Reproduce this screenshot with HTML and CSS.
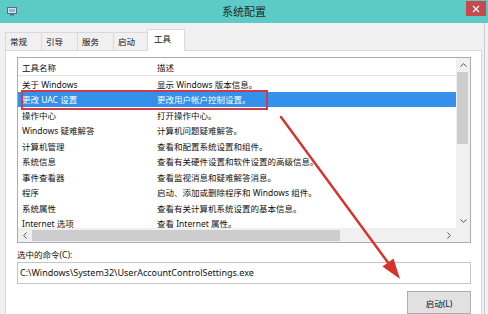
FILE: index.html
```html
<!DOCTYPE html>
<html lang="zh-CN">
<head>
<meta charset="utf-8">
<title>系统配置</title>
<link rel="stylesheet" href="styles.css">
</head>
<body>
<header class="titlebar">
  <div class="tb-left">
    <svg class="app-icon" width="10" height="9" viewBox="0 0 10 9">
      <rect x="0.5" y="0.5" width="9" height="6" fill="#cfe3f3" stroke="#5a6f86"/>
      <rect x="2" y="2" width="6" height="3" fill="#8fb7dd"/>
      <rect x="3" y="7" width="4" height="1.5" fill="#5a6f86"/>
    </svg>
  </div>
  <div class="tb-title">系统配置</div>
  <div class="tb-right">
    <div class="close">
      <svg width="8" height="8" viewBox="0 0 8 8"><path d="M1 1L7 7M7 1L1 7" stroke="#fff" stroke-width="1.3"/></svg>
    </div>
  </div>
</header>
<div class="client">
  <div class="tabs">
    <div class="tab">常规</div>
    <div class="tab">引导</div>
    <div class="tab">服务</div>
    <div class="tab">启动</div>
    <div class="tab active">工具</div>
  </div>
  <div class="panel">
    <div class="listbox">
      <div class="list">
        <div class="row head"><span class="cell">工具名称</span><span class="cell">描述</span></div>
        <div class="row"><span class="cell">关于 Windows</span><span class="cell">显示 Windows 版本信息。</span></div>
        <div class="row selected"><span class="cell">更改 UAC 设置</span><span class="cell">更改用户帐户控制设置。</span></div>
        <div class="row"><span class="cell">操作中心</span><span class="cell">打开操作中心。</span></div>
        <div class="row"><span class="cell">Windows 疑难解答</span><span class="cell">计算机问题疑难解答。</span></div>
        <div class="row"><span class="cell">计算机管理</span><span class="cell">查看和配置系统设置和组件。</span></div>
        <div class="row"><span class="cell">系统信息</span><span class="cell">查看有关硬件设置和软件设置的高级信息。</span></div>
        <div class="row"><span class="cell">事件查看器</span><span class="cell">查看监视消息和疑难解答消息。</span></div>
        <div class="row"><span class="cell">程序</span><span class="cell">启动、添加或删除程序和 Windows 组件。</span></div>
        <div class="row"><span class="cell">系统属性</span><span class="cell">查看有关计算机系统设置的基本信息。</span></div>
        <div class="row"><span class="cell">Internet 选项</span><span class="cell">查看 Internet 属性。</span></div>
      </div>
      <div class="vscroll">
        <div class="sb-btn"><svg width="7" height="4" viewBox="0 0 7 4"><path d="M0.5 3.5L3.5 0.7L6.5 3.5" fill="none" stroke="#555" stroke-width="1"/></svg></div>
        <div class="vthumb"></div>
        <div class="sb-track"></div>
        <div class="sb-btn"><svg width="7" height="4" viewBox="0 0 7 4"><path d="M0.5 0.5L3.5 3.3L6.5 0.5" fill="none" stroke="#555" stroke-width="1"/></svg></div>
      </div>
      <div class="hscroll">
        <div class="sb-btn"><svg width="4" height="7" viewBox="0 0 4 7"><path d="M3.5 0.5L0.7 3.5L3.5 6.5" fill="none" stroke="#555" stroke-width="1"/></svg></div>
        <div class="hthumb"></div>
        <div class="sb-track"></div>
        <div class="sb-btn"><svg width="4" height="7" viewBox="0 0 4 7"><path d="M0.5 0.5L3.3 3.5L0.5 6.5" fill="none" stroke="#555" stroke-width="1"/></svg></div>
      </div>
      <div class="corner"></div>
    </div>
    <div class="label">选中的命令(C):</div>
    <div class="cmd">C:\Windows\System32\UserAccountControlSettings.exe</div>
    <div class="actions"><div class="btn">启动(L)</div></div>
  </div>
</div>
<div class="highlight"></div>
<svg class="arrow" width="488" height="314" viewBox="0 0 488 314">
  <path d="M281 117 L392 268" stroke="#d8322d" stroke-width="2.4" stroke-linecap="round"/>
  <polygon points="400,279 393.5,258.5 382.5,266.5" fill="#d8322d"/>
</svg>
</body>
</html>
```

FILE: styles.css
```css
* { box-sizing: border-box; }
html, body { margin: 0; padding: 0; }
body {
  width: 488px;
  height: 314px;
  overflow: hidden;
  position: relative;
  background: #eef3f7;
  font-family: "Noto Sans", "Noto Sans CJK SC", sans-serif;
  font-size: 8.5px;
  color: #111;
}
.titlebar {
  height: 23px;
  background: #5ccbc7;
  display: grid;
  grid-template-columns: 1fr auto 1fr;
  align-items: center;
}
.tb-left { display: flex; align-items: center; padding-left: 7px; }
.app-icon { display: block; }
.tb-title {
  font-family: "Noto Sans CJK SC", sans-serif;
  font-size: 11px;
  color: #1f2d2d;
  line-height: 23px;
}
.tb-right { justify-self: end; align-self: start; padding: 1px 2px 0 0; }
.close {
  width: 20px;
  height: 15px;
  background: #c8484c;
  display: flex;
  align-items: center;
  justify-content: center;
}
.close svg { display: block; }
.client {
  width: 485px;
  height: 291px;
  background: #f0f0f0;
  border-right: 1px solid #c9ccce;
  padding: 6px 0 0 5px;
  display: flex;
  flex-direction: column;
}
.tabs {
  height: 21px;
  display: flex;
  align-items: flex-end;
}
.tab {
  width: 37px;
  height: 18px;
  margin-right: -1px;
  border: 1px solid #d9d9d9;
  border-bottom: none;
  background: #f0f0f0;
  padding-left: 4px;
  line-height: 17px;
  font-family: "Noto Sans CJK SC", sans-serif;
  font-size: 8.5px;
}
.tab.active {
  position: relative;
  z-index: 1;
  width: 38px;
  height: 22px;
  margin-left: -2px;
  margin-bottom: -1px;
  background: #fff;
  padding-left: 6px;
  line-height: 16px;
}
.panel {
  width: 477px;
  flex: 1;
  background: #fff;
  border: 1px solid #d9d9d9;
  border-bottom: none;
  padding: 6px 10px 0 11px;
  display: flex;
  flex-direction: column;
}
.listbox {
  width: 454px;
  height: 186px;
  border: 1px solid #a9acb2;
  display: grid;
  grid-template-columns: 1fr 14px;
  grid-template-rows: 1fr 14px;
  background: #fff;
}
.list { overflow: hidden; }
.row {
  display: grid;
  grid-template-columns: 135px 1fr;
  height: 15.5px;
  align-items: center;
  white-space: nowrap;
}
.row.head {
  height: 18px;
  border-bottom: 1px solid #e3e3e3;
}
.cell { padding-left: 4px; overflow: hidden; }
.row.selected { background: #3391eb; color: #fff; }
.vscroll {
  background: #f0f0f0;
  display: flex;
  flex-direction: column;
}
.hscroll {
  background: #f0f0f0;
  display: flex;
}
.sb-btn {
  width: 14px;
  height: 14px;
  flex: none;
  display: flex;
  align-items: center;
  justify-content: center;
}
.sb-btn svg { display: block; }
.sb-track { flex: 1; }
.vthumb {
  height: 72px;
  margin: 0 2px 0 1px;
  background: #cdcdcd;
}
.hthumb {
  width: 308px;
  margin: 2px 0 1px;
  background: #cdcdcd;
}
.corner { background: #f0f0f0; }
.label {
  margin-top: 6px;
  height: 12px;
  line-height: 12px;
}
.cmd {
  margin-top: 1px;
  width: 454px;
  height: 22px;
  border: 1px solid #c4c6ca;
  padding-left: 2px;
  line-height: 20px;
  font-size: 9px;
  white-space: nowrap;
}
.actions {
  margin-top: 7px;
  display: flex;
  justify-content: flex-end;
  width: 454px;
}
.btn {
  width: 64px;
  height: 23px;
  background: #e1e1e1;
  border: 1px solid #adadad;
  display: flex;
  align-items: center;
  justify-content: center;
}
.highlight {
  position: absolute;
  left: 21px;
  top: 90px;
  width: 247px;
  height: 20px;
  border: 2px solid #d13a46;
}
.arrow {
  position: absolute;
  left: 0;
  top: 0;
  pointer-events: none;
}
```
